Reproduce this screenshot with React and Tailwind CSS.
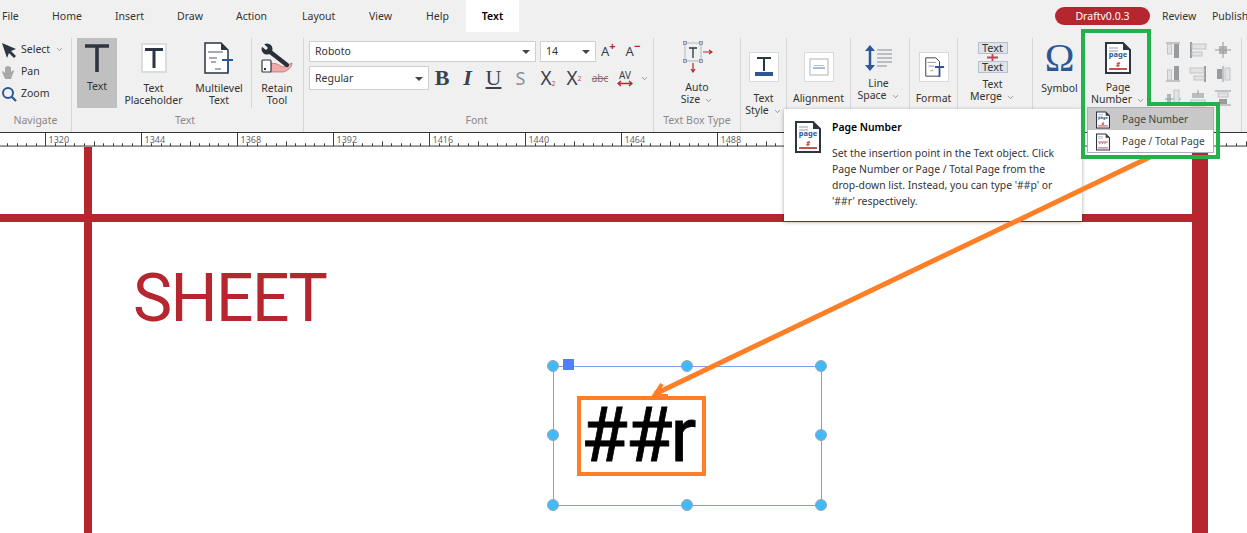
import React from 'react';
import { ChevronDown } from 'lucide-react';

const ui = "font-['Noto_Sans',sans-serif]";
const red = '#b5262f';
const navy = '#2b5797';
const ink = '#2d3540';

const menu = [
  { name: 'File', cls: 'w-[50px]' },
  { name: 'Home', cls: 'w-[63px]' },
  { name: 'Insert', cls: 'w-[62px]' },
  { name: 'Draw', cls: 'w-[59px]' },
  { name: 'Action', cls: 'w-[66px]' },
  { name: 'Layout', cls: 'w-[67px]' },
  { name: 'View', cls: 'w-[57px]' },
  { name: 'Help', cls: 'w-[40px]' },
];

function Chev({ className = '' }) {
  return <ChevronDown className={`inline-block w-[9px] h-[9px] text-[#555] ${className}`} strokeWidth={1.5} />;
}

function Caret() {
  return <span className="w-0 h-0 border-x-[4px] border-x-transparent border-t-[4px] border-t-[#444]" />;
}

function PageDoc({ small, total }) {
  return (
    <svg viewBox="0 0 26 32" className={small ? 'w-[14px] h-[18px]' : 'w-[26px] h-[32px]'}>
      <path d="M1 1h17l7 7v23H1z" fill="#fff" stroke={ink} strokeWidth="2" />
      <path d="M18 1v7h7z" fill={ink} />
      <path d="M4 6h9M4 9h9" stroke="#b8bec6" strokeWidth="1.6" />
      {total ? (
        <path d="M4 16h18M6 20l2-3M11 20l2-3M16 20l2-3" stroke={red} strokeWidth="1.4" />
      ) : (
        <>
          <text x="13" y="15" textAnchor="middle" fontSize="7.5" fontWeight="700" fill={navy} fontFamily="'Noto Sans',sans-serif">page</text>
          <text x="13" y="24.5" textAnchor="middle" fontSize="6.5" fontWeight="700" fontStyle="italic" fill={red} fontFamily="'Noto Sans',sans-serif">#</text>
        </>
      )}
      <path d="M4 27h18" stroke={red} strokeWidth="1.6" />
    </svg>
  );
}

function BoxedIcon({ children }) {
  return (
    <span className="flex items-center justify-center w-[30px] h-[30px] bg-white border border-[#d5d8dc]">{children}</span>
  );
}

function Tool({ pad, label, second, chev, icon, cls = '' }) {
  return (
    <div className={`flex flex-col items-center shrink-0 ${cls}`}>
      <div className={`flex justify-center items-start shrink-0 ${pad}`}>{icon}</div>
      <div className="text-center leading-[12px] text-[10.5px] text-[#333] whitespace-nowrap">
        <div>{label}{!second && chev && <Chev className="ml-1" />}</div>
        {second && <div>{second}{chev && <Chev className="ml-1" />}</div>}
      </div>
    </div>
  );
}

function Group({ cls, capCls = '', caption, children }) {
  return (
    <div className={`flex flex-col h-full shrink-0 border-r border-[#d6d6d6] ${cls}`}>
      <div className="flex flex-1 min-h-0">{children}</div>
      <div className={`h-[24px] text-center text-[10.5px] leading-[24px] text-[#8c8788] ${capCls}`}>{caption}</div>
    </div>
  );
}

function Ruler() {
  const ticks = [];
  const majors = [];
  for (let i = -1; i < 13; i++) {
    const x = 45.5 + 96 * i;
    majors.push(
      <g key={i}>
        <path d={`M${x} 0V14`} stroke="#333" strokeWidth="1" />
        {/* the labels further right sit under the tooltip and the dropdown */}
        {i >= 0 && i <= 7 && <text x={x + 3} y="10.5" fontSize="9" fill="#666" fontFamily="'Noto Sans',sans-serif">{1320 + 24 * i}</text>}
      </g>
    );
    for (let t = 1; t < 10; t++) {
      const tx = Math.round(x + 9.6 * t) + 0.5;
      ticks.push(<path key={`${i}-${t}`} d={`M${tx} ${t === 5 ? 9 : 11}V14`} stroke="#333" strokeWidth="1" />);
    }
  }
  return (
    <svg className="block w-full h-[15px] bg-white border-t border-[#333]" viewBox="0 0 1247 15" preserveAspectRatio="none">
      {ticks}
      {majors}
      <path d="M0 14H1247" stroke="#333" strokeWidth="1" />
    </svg>
  );
}

function GreyAlign() {
  const c = '#c2c3c5';
  const d = '#9a9b9d';
  const l = '#e2e3e5';
  const paths = [
    <><path d="M2 2h14" stroke={c} strokeWidth="2" /><rect x="3.500" y="3" width="4" height="10" fill={l} stroke={c} /><rect x="10" y="3" width="5" height="14" fill={d} /></>,
    <><path d="M2 1v16" stroke={d} strokeWidth="2" /><rect x="3" y="3" width="14" height="5" fill={l} stroke={c} /><rect x="3" y="11" width="10" height="4" fill={l} stroke={c} /></>,
    <><path d="M9 1v16M1 9h16" stroke={c} strokeWidth="2" /><rect x="5" y="5" width="8" height="8" fill={d} opacity=".7" /></>,
    <><path d="M2 16h14" stroke={c} strokeWidth="2" /><rect x="3.500" y="5" width="4" height="10" fill={l} stroke={c} /><rect x="10" y="1" width="5" height="14" fill={d} /></>,
    <><path d="M16 1v16" stroke={d} strokeWidth="2" /><rect x="1" y="3" width="14" height="5" fill={l} stroke={c} /><rect x="5" y="11" width="10" height="4" fill={l} stroke={c} /></>,
    <><path d="M9 1v16" stroke={c} strokeWidth="2" /><rect x="3" y="4" width="5" height="10" fill={d} /><rect x="11" y="3" width="5" height="12" fill={l} stroke={c} /></>,
    <><path d="M1 10h16" stroke={c} strokeWidth="2" /><rect x="3" y="5" width="4" height="10" fill={d} opacity=".7" /><rect x="10" y="1" width="5" height="15" fill={l} stroke={c} /></>,
    <><path d="M9 1v4" stroke={c} strokeWidth="2" /><rect x="3" y="4" width="12" height="5" fill={d} opacity=".6" /><rect x="2" y="11" width="14" height="6" fill={l} stroke={c} /></>,
    <><path d="M1 2h16M1 16h16" stroke={c} strokeWidth="2" /><rect x="4" y="4" width="10" height="4" fill={l} stroke={c} /><rect x="5" y="10" width="8" height="5" fill={d} /></>,
  ];
  return (
    <div className="w-[88px] h-full border-r border-[#d6d6d6]">
      <div className="grid grid-cols-3 gap-x-[7px] gap-y-[6px] pt-[3px] pl-[10px] w-fit">
        {paths.map((p, i) => (
          <svg key={i} viewBox="0 0 18 18" className="w-[18px] h-[18px]">{p}</svg>
        ))}
      </div>
    </div>
  );
}

function FontStyleIcons() {
  return (
    <div className="flex items-center h-[24px] text-[#3a424c] font-['Liberation_Serif',serif] text-[22px] leading-none -ml-[1px]">
      <span className="w-[24px] text-center font-bold">B</span>
      <span className="w-[27px] text-center font-bold italic">I</span>
      <span className="w-[25px] text-center underline">U</span>
      <span className="w-[29px] text-center text-[#8d9197] font-['Noto_Sans',sans-serif] text-[18px]">S</span>
      <span className="w-[26px] text-center font-['Noto_Sans',sans-serif] text-[19px]">X<sub className="text-[7px] text-[#c0474e]">2</sub></span>
      <span className="w-[26px] text-center font-['Noto_Sans',sans-serif] text-[19px]">X<sup className="text-[7px] text-[#c0474e]">2</sup></span>
      <span className="w-[26px] text-center text-[#8c6a6e] line-through font-['Noto_Sans',sans-serif] text-[10px]">abc</span>
      <span className="flex flex-col items-center w-[24px] font-['Noto_Sans',sans-serif]">
        <span className="text-[10px] leading-[10px]">AV</span>
        <svg viewBox="0 0 16 7" className="w-[16px] h-[7px]"><path d="M1 3.500h14M4 1L1 3.500 4 6M12 1l3 2.500L12 6" fill="none" stroke={red} strokeWidth="1.400" /></svg>
      </span>
      <Chev className="ml-[3px]" />
    </div>
  );
}

export default function App() {
  return (
    <div className={`relative h-screen overflow-hidden bg-white ${ui}`}>
      {/* menu */}
      <div className="flex items-stretch h-[32px] bg-[#f0f0f0] text-[10.5px] text-[#333] pl-[2px]">
        {menu.map((m) => (
          <div key={m.name} className={`shrink-0 leading-[32px] ${m.cls}`}>{m.name}</div>
        ))}
        <div className="shrink-0 w-[53px] bg-white text-center leading-[32px] font-semibold text-black">Text</div>
        <div className="shrink-0 ml-[536px] mt-[7px] w-[95px] h-[18px] rounded-full bg-[#b5262f] text-white text-center leading-[18px]">Draftv0.0.3</div>
        <div className="shrink-0 ml-[12px] w-[50px] leading-[32px]">Review</div>
        <div className="shrink-0 leading-[32px]">Publish</div>
      </div>

      {/* ribbon */}
      <div className="flex h-[100px] pt-[6px] bg-[#f0f0f0]">
        <Group cls="w-[72px]" caption="Navigate">
          <div className="flex flex-col pl-[1px] pt-[2px] gap-[3px] text-[10.5px] text-[#333]">
            <div className="flex items-center h-[19px] gap-[4px]">
              <svg viewBox="0 0 16 16" className="w-[16px] h-[16px]"><path d="M1 1l14 6-5 2 5 5-2 2-5-5-2 5z" fill={ink} /></svg>
              Select <Chev className="ml-[1px]" />
            </div>
            <div className="flex items-center h-[19px] gap-[4px]">
              <svg viewBox="0 0 16 16" className="w-[16px] h-[16px]"><path d="M4 15L1 8l1-1 2 2V3h1.500v4V2h1.500v5V2h1.500v5V3H10v5l2-2 1 1-3 8z" fill="#a8a8a8" /></svg>
              Pan
            </div>
            <div className="flex items-center h-[19px] gap-[4px]">
              <svg viewBox="0 0 16 16" className="w-[16px] h-[16px]"><circle cx="7" cy="7" r="5" fill="none" stroke={navy} strokeWidth="2" /><path d="M10.500 10.500L15 15" stroke={navy} strokeWidth="2.200" /></svg>
              Zoom
            </div>
          </div>
        </Group>

        <Group cls="w-[232px]" capCls="pr-[5px]" caption="Text">
          <div className="flex flex-col items-center ml-[5px] w-[40px] h-[70px] bg-[#c0c0c0] text-[10.5px] text-[#333]">
            <svg viewBox="0 0 24 28" className="w-[24px] h-[28px] mt-[6px]"><path d="M0 2h24M12 2V28" stroke={ink} strokeWidth="3.600" /></svg>
            <span className="mt-[8px] leading-[12px]">Text</span>
          </div>
          <Tool
            cls="w-[73px]"
            pad="h-[44px] pt-[5px]"
            label="Text"
            second="Placeholder"
            icon={<span className="flex items-center justify-center w-[26px] h-[30px] bg-white border-2 border-[#d9dde0]"><svg viewBox="0 0 18 20" className="w-[18px] h-[20px]"><path d="M0 1.500h18M9 1.500V20" stroke={ink} strokeWidth="3" /></svg></span>}
          />
          <Tool
            cls="w-[58px]"
            pad="h-[44px] pt-[4px]"
            label="Multilevel"
            second="Text"
            icon={<svg viewBox="0 0 30 32" className="w-[30px] h-[32px]"><path d="M1 1h16l7 7v23H1z" fill="#fff" stroke={ink} strokeWidth="1.500" /><path d="M17 1v7h7z" fill={ink} /><path d="M4 10h15M5 16h8M7 20h5M11 27h6" stroke="#8c9096" strokeWidth="1.500" /><path d="M18 18h11M24 18v12" stroke={navy} strokeWidth="2" /></svg>}
          />
          <div className="w-px h-[70px] ml-[3px] bg-[#d6d6d6]" />
          <Tool
            cls="w-[50px]"
            pad="h-[44px] pt-[5px]"
            label="Retain"
            second="Tool"
            icon={<svg viewBox="0 0 32 30" className="w-[32px] h-[30px]"><path d="M9 21c5-2 9 1 13 3l9-4c0 4-4 8-9 9H9z" fill="#f2aaa8" stroke="#a05a5a" strokeWidth=".6" /><path d="M8 8l18 14" stroke="#2a3038" strokeWidth="4.200" strokeLinecap="round" /><circle cx="6" cy="6" r="5.500" fill="#2a3038" /><path d="M2 0L7 5 5 7 0 3z" fill="#f0f0f0" /><rect x="1" y="17" width="9" height="12" rx="1" fill="#fff" stroke={ink} strokeWidth="1.200" /><rect x="3" y="25" width="2" height="2" fill={ink} /></svg>}
          />
        </Group>

        <Group cls="w-[350px]" capCls="pr-[4px]" caption="Font">
          <div className="flex flex-col gap-[4px] pl-[5px] pt-[3px]">
            <div className="flex items-center gap-[4px]">
              <div className="flex items-center justify-between w-[227px] h-[21px] pl-[5px] pr-[5px] pt-px bg-white border border-[#ccd0d6] text-[10.5px] text-[#333]">Roboto <Caret /></div>
              <div className="flex items-center justify-between w-[56px] h-[21px] pl-[5px] pr-[5px] pt-px bg-white border border-[#ccd0d6] text-[10.5px] text-[#333]">14 <Caret /></div>
              <span className="ml-[1px] text-[13px] text-[#3a424c]">A<sup className="text-[11px] text-[#b5262f] font-bold">+</sup></span>
              <span className="ml-[6px] text-[13px] text-[#3a424c]">A<sup className="text-[11px] text-[#b5262f] font-bold">−</sup></span>
            </div>
            <div className="flex items-center gap-[2px]">
              <div className="flex items-center justify-between w-[120px] h-[24px] pl-[5px] pr-[5px] pt-px bg-white border border-[#ccd0d6] text-[10.5px] text-[#333]">Regular <Caret /></div>
              <FontStyleIcons />
            </div>
          </div>
        </Group>

        <Group cls="w-[87px] justify-center" caption="Text Box Type">
          <Tool
            cls="w-[86px]"
            pad="h-[43px] pt-[3px]"
            label="Auto"
            second="Size"
            chev
            icon={<svg viewBox="0 0 30 32" className="w-[30px] h-[32px] ml-[1px]"><rect x="2" y="2" width="16" height="18" fill="none" stroke="#c4cad2" strokeWidth="1.500" /><g fill="#c5d0de" stroke="#6a7f9a" strokeWidth=".7"><rect x="0.500" y="0.500" width="3" height="3" /><rect x="16.500" y="0.500" width="3" height="3" /><rect x="0.500" y="18.500" width="3" height="3" /><rect x="16.500" y="18.500" width="3" height="3" /></g><path d="M6 7h8M10 7v10" stroke={ink} strokeWidth="1.300" /><path d="M20 11h9M26 9l3 2-3 2M10 22v9M8 28l2 3 2-3" fill="none" stroke={red} strokeWidth="1.200" /></svg>}
          />
        </Group>

        <Group cls="w-[46px]" caption="">
          <Tool
            cls="w-[45px]"
            pad="h-[54px] pt-[14px]"
            label="Text"
            second="Style"
            chev
            icon={<BoxedIcon><svg viewBox="0 0 22 22" className="w-[22px] h-[22px]"><path d="M4 2h14M11 2v13" stroke={ink} strokeWidth="2" /><rect x="2" y="16" width="18" height="4" fill={navy} /></svg></BoxedIcon>}
          />
        </Group>

        <Group cls="w-[64px]" caption="">
          <Tool
            cls="w-[63px]"
            pad="h-[54px] pt-[14px]"
            label="Alignment"
            icon={<BoxedIcon><svg viewBox="0 0 20 20" className="w-[20px] h-[20px]"><rect x="1" y="2" width="18" height="16" fill="none" stroke="#c0c4ca" strokeWidth="1.300" /><path d="M5 8h10v1H5zM4 10h12v2H4z" fill="#a9bcd6" /></svg></BoxedIcon>}
          />
        </Group>

        <Group cls="w-[59px]" caption="">
          <Tool
            cls="w-[55px]"
            pad="h-[39px] pt-[6px]"
            label="Line"
            second="Space"
            chev
            icon={<svg viewBox="0 0 28 28" className="w-[28px] h-[28px]"><path d="M5 1L0 7h10zM5 27L0 21h10z" fill={navy} /><path d="M5 6v16" stroke={navy} strokeWidth="2.500" /><path d="M12 6h15M12 10h15M12 14h15M12 18h15M12 22h10" stroke="#a9adb3" strokeWidth="1.300" /></svg>}
          />
        </Group>

        <Group cls="w-[48px]" caption="">
          <Tool
            cls="w-[47px]"
            pad="h-[54px] pt-[14px]"
            label="Format"
            icon={<BoxedIcon><svg viewBox="0 0 24 24" className="w-[22px] h-[22px]"><path d="M3 2h11l4 4v16H3z" fill="#fff" stroke={ink} strokeWidth="1" /><path d="M5 7h9M6 11h6M8 16h3" stroke="#8c9096" /><path d="M13 12h10M18 12v11" stroke={navy} strokeWidth="2" /></svg></BoxedIcon>}
          />
        </Group>

        <Group cls="w-[75px]" caption="">
          <Tool
            cls="w-[69px]"
            pad="h-[40px] pt-[4px]"
            label="Text"
            second="Merge"
            chev
            icon={
              <div className="flex flex-col items-center text-[11px] leading-[10px] text-[#333]">
                <span className="w-[30px] text-center bg-[#dfe3ea] border border-[#b6c0d0]">Text</span>
                <svg viewBox="0 0 11 7" className="w-[11px] h-[7px]"><path d="M0 3.500h11M5.500 0v7" stroke="#c0474e" strokeWidth="1.800" /></svg>
                <span className="w-[30px] text-center bg-[#dfe3ea] border border-[#b6c0d0]">Text</span>
              </div>
            }
          />
        </Group>

        <Group cls="w-[53px] border-r-0" caption="">
          <Tool
            cls="w-[53px]"
            pad="h-[44px] pt-[1px]"
            label="Symbol"
            icon={<span className="font-['Liberation_Serif',serif] text-[40px] leading-[38px] text-[#2b5797]">Ω</span>}
          />
        </Group>

        <Group cls="w-[68px] border-r-0" caption="">
          <Tool
            cls="w-[64px]"
            pad="h-[43px] pt-[4px]"
            label="Page"
            second="Number"
            chev
            icon={<PageDoc />}
          />
        </Group>

        <GreyAlign />
      </div>

      <Ruler />

      {/* sheet on the canvas */}
      <div className="absolute left-[84px] top-[147px] bottom-0 w-[8px] bg-[#b5262f]" />
      <div className="absolute left-0 top-[214px] w-[1192px] h-[8px] bg-[#b5262f]" />
      <div className="absolute left-[1192px] top-[147px] bottom-0 w-[16px] bg-[#b5262f]" />
      <div className="absolute left-[133px] top-[260px] font-['Roboto',sans-serif] text-[66px] tracking-[-1.6px] leading-[78px] text-[#b5262f]">SHEET</div>

      {/* selected text box */}
      <div className="absolute left-[553px] top-[366px] w-[269px] h-[140px] border border-[#7b9fee]">
        <span className="absolute left-[9px] -top-[8px] w-[11px] h-[11px] bg-[#4d7fff]" />
        {[
          'left-[-7px] top-[-7px]', 'left-[127px] top-[-7px]', 'left-[261px] top-[-7px]',
          'left-[-7px] top-[62px]', 'left-[261px] top-[62px]',
          'left-[-7px] top-[132px]', 'left-[127px] top-[132px]', 'left-[261px] top-[132px]',
        ].map((p) => (
          <span key={p} className={`absolute ${p} w-[12px] h-[12px] rounded-full bg-[#41bafc] border border-[#9aa7b0]`} />
        ))}
        <div className="absolute left-[23px] top-[29px] w-[129px] h-[80px] border-[4px] border-[#ff7f27] bg-white font-['Roboto',sans-serif] text-[76px] tracking-[-2px] [-webkit-text-stroke:0.8px_black] leading-[70px] text-black whitespace-nowrap">##r</div>
      </div>

      {/* tooltip */}
      <div className="absolute left-[784px] top-[109px] w-[298px] h-[112px] bg-white shadow-[0_1px_4px_rgba(0,0,0,0.35)] flex text-[10.4px] text-[#333]">
        <div className="pl-[11px] pt-[12px] w-[48px]"><PageDoc /></div>
        <div className="pt-[11px]">
          <div className="font-semibold leading-[14px] text-black">Page Number</div>
          <div className="mt-[11px] leading-[16px] w-[240px]">
            Set the insertion point in the Text object. Click<br />
            Page Number or Page / Total Page from the<br />
            drop-down list. Instead, you can type '##p' or<br />
            '##r' respectively.
          </div>
        </div>
      </div>

      {/* dropdown */}
      <div className="absolute left-[1087px] top-[107px] w-[127px] h-[46px] bg-white border border-[#a9afbd] text-[10.2px] text-[#444] whitespace-nowrap">
        <div className="flex items-center h-[22px] pl-[8px] gap-[12px] pt-px bg-[#c8c8c8]"><PageDoc small /><span>Page Number</span></div>
        <div className="flex items-center h-[22px] pl-[8px] gap-[12px] pt-px"><PageDoc small total /><span>Page / Total Page</span></div>
      </div>

      {/* annotation */}
      <svg className="absolute inset-0 w-full h-full pointer-events-none" viewBox="0 0 1247 533">
        <path d="M1150 157L655 394" stroke="#ff7f27" strokeWidth="5" />
        <path d="M662 384L654 396L668 396" fill="none" stroke="#ff7f27" strokeWidth="4" />
        <path d="M1149 104V31H1083V157H1218V104H1147" fill="none" stroke="#22b14c" strokeWidth="4" />
      </svg>
    </div>
  );
}
